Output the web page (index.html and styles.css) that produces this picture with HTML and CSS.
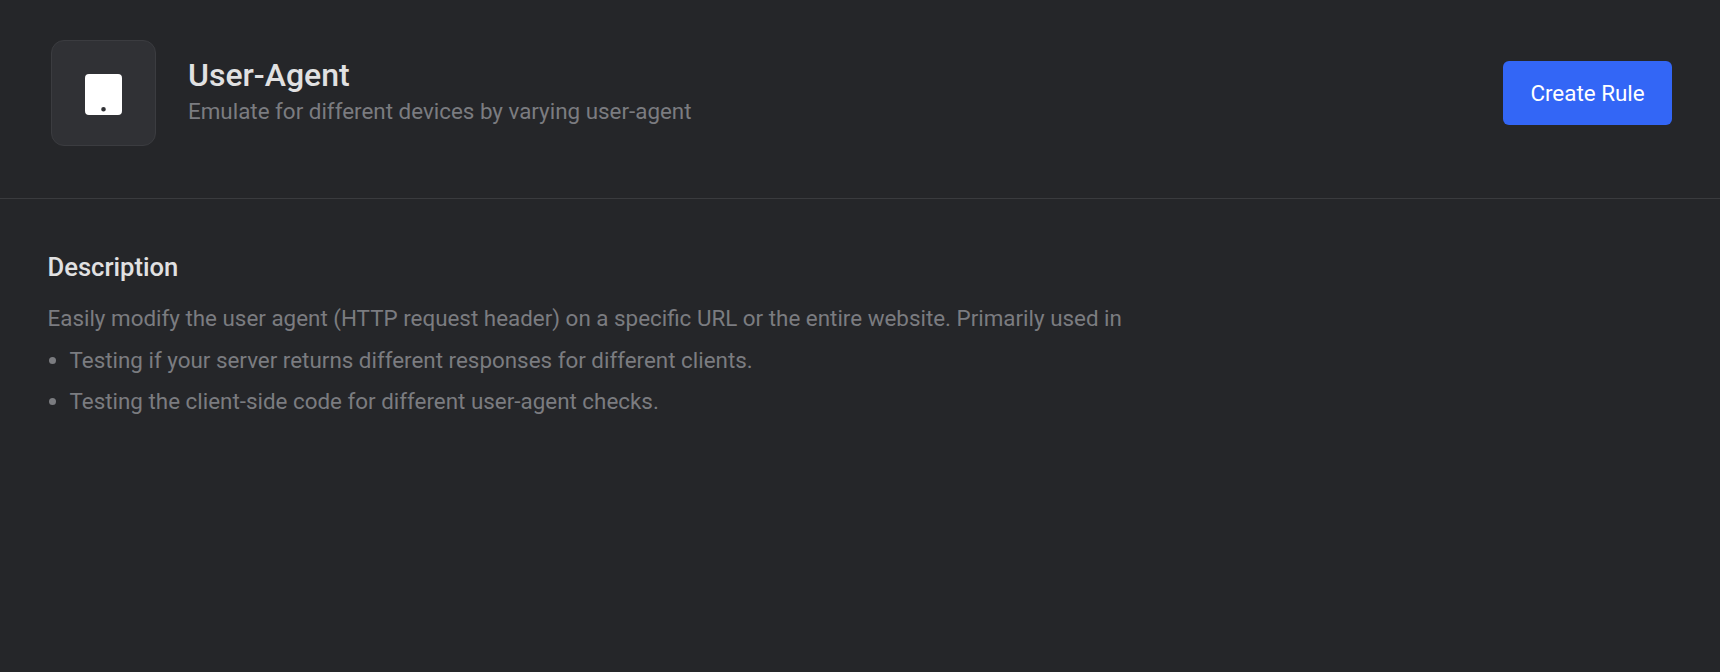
FILE: index.html
```html
<!DOCTYPE html>
<html lang="en">
<head>
<meta charset="utf-8">
<title>User-Agent</title>
<link rel="stylesheet" href="styles.css">
</head>
<body>
<header class="header">
  <div class="app">
    <div class="app-icon">
      <svg class="tablet" viewBox="0 0 37 41" width="37" height="41" aria-hidden="true">
        <path fill-rule="evenodd" fill="#fff" d="M4 0h29a4 4 0 0 1 4 4v33a4 4 0 0 1-4 4H4a4 4 0 0 1-4-4V4a4 4 0 0 1 4-4Zm14.500 33a2.300 2.300 0 1 0 0 4.600a2.300 2.300 0 0 0 0-4.600Z"/>
      </svg>
    </div>
    <div class="app-text">
      <h1 class="title">User-Agent</h1>
      <p class="subtitle">Emulate for different devices by varying user-agent</p>
    </div>
  </div>
  <button class="cta">Create Rule</button>
</header>
<main class="content">
  <h2 class="heading">Description</h2>
  <p class="para">Easily modify the user agent (HTTP request header) on a specific URL or the entire website. Primarily used in</p>
  <ul class="list">
    <li>Testing if your server returns different responses for different clients.</li>
    <li>Testing the client-side code for different user-agent checks.</li>
  </ul>
</main>
</body>
</html>
```
FILE: styles.css
```css
* { box-sizing: border-box; }
html, body { height: 100%; }
body {
  margin: 0;
  background: #252629;
  font-family: Roboto, "Noto Sans", sans-serif;
  color: #7b7c80;
}
.header {
  height: 199px;
  padding: 40px 48px 0 51px;
  display: flex;
  justify-content: space-between;
  align-items: flex-start;
  border-bottom: 1px solid #3a3b3e;
}
.app { display: flex; align-items: flex-start; gap: 32px; }
.app-icon {
  width: 105px;
  height: 106px;
  background: #303135;
  border: 1px solid #3b3c40;
  border-radius: 13px;
  display: flex;
  align-items: center;
  justify-content: center;
}
.tablet { display: block; margin-top: 3px; }
.app-text { padding-top: 16px; }
.title {
  margin: 0;
  font-size: 32px;
  line-height: 38px;
  font-weight: 500;
  color: #e1e1e2;
}
.subtitle {
  margin: 1px 0 0;
  font-size: 22.4px;
  line-height: 32px;
  font-weight: 400;
}
.cta {
  margin-top: 21px;
  width: 169px;
  height: 64px;
  border: 0;
  border-radius: 6px;
  background: #3366f6;
  color: #fff;
  font: 400 22.4px Roboto, sans-serif;
}
.content { padding: 52px 48px 0 47.5px; }
.heading {
  margin: 0;
  font-size: 25.6px;
  line-height: 32px;
  font-weight: 500;
  color: #e1e1e2;
}
.para {
  margin: 19px 0 0;
  font-size: 22.4px;
  line-height: 32px;
}
.list {
  margin: 10px 0 0;
  padding: 0 0 0 22px;
  font-size: 22.4px;
  line-height: 32px;
}
.list li + li { margin-top: 9px; }
```
